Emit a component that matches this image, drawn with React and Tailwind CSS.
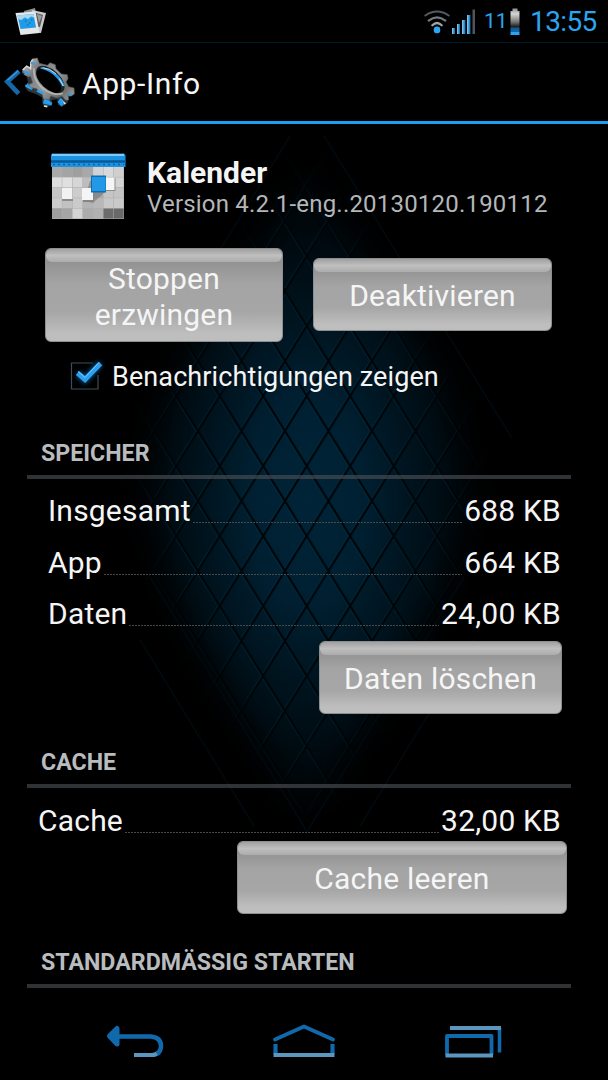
import React from 'react';

const storage = [
  { label: 'Insgesamt', value: '688 KB' },
  { label: 'App', value: '664 KB' },
  { label: 'Daten', value: '24,00 KB' },
];

const Wallpaper = () => (
  <svg className="col-start-1 row-start-1" width="608" height="1080" viewBox="0 0 608 1080">
    <defs>
      <radialGradient id="glow" cx="0" cy="0" r="1" gradientUnits="userSpaceOnUse" gradientTransform="translate(307 500) scale(185 330)">
        <stop offset="0" stopColor="#002438" />
        <stop offset="0.3" stopColor="#002032" />
        <stop offset="0.55" stopColor="#00141f" />
        <stop offset="0.8" stopColor="#00090e" />
        <stop offset="1" stopColor="#000203" />
      </radialGradient>
      <pattern id="lattice" x="306.7" y="466" width="43.5" height="70" patternUnits="userSpaceOnUse">
        <path d="M-2 -3.2L45.5 73.2M45.5 -3.2L-2 73.2" stroke="#000508" strokeWidth="2.2" />
      </pattern>
      <pattern id="shine" x="304.7" y="466" width="43.5" height="70" patternUnits="userSpaceOnUse">
        <path d="M-2 -3.2L45.5 73.2M45.5 -3.2L-2 73.2" stroke="#003a58" strokeWidth="1" />
      </pattern>
      <filter id="soft" x="-20%" y="-20%" width="140%" height="140%">
        <feGaussianBlur stdDeviation="16" />
      </filter>
      <mask id="diamond">
        <path d="M307 165L390 290L455 400L475 500L445 590L380 705L307 820L234 705L169 590L139 500L159 400L224 290Z" fill="#ffffff" filter="url(#soft)" />
      </mask>
    </defs>
    <rect width="608" height="1080" fill="#000000" />
    <g mask="url(#diamond)">
      <rect y="124" width="608" height="870" fill="url(#glow)" />
      <rect y="124" width="608" height="870" fill="url(#shine)" opacity="0.35" />
      <rect y="124" width="608" height="870" fill="url(#lattice)" />
    </g>
    {/* faint outer seams */}
    <g fill="none" stroke="#000a10" strokeWidth="1.5">
      <path d="M150 577L300 820L307 832L314 820L464 577" />
      <path d="M140 640L254 826M474 640L360 826" />
      <path d="M290 136L182 312M324 136L512 438" />
    </g>
  </svg>
);

const PhotosIcon = () => (
  <svg width="32" height="30" viewBox="0 0 32 30">
    <path d="M9 4L20 1L24 22L12 26Z" fill="#8b8f92" />
    <path d="M17 3L31 6L26 26L14 25Z" fill="#c9c9c9" />
    <path d="M18 5L28 8L25 20L18 19Z" fill="#5b5b5b" />
    <path d="M22 7L27 9L24 16Z" fill="#9b9b9b" />
    <path d="M0.5 6L20.5 4.5L24.500 26L5.500 28Z" fill="#e4e6e8" />
    <path d="M2.500 8.500L18.500 7L21 20.500L5.500 22Z" fill="#1f9be8" />
    <path d="M2.500 8.500L18.500 7L19.200 10.500L16 9.500L13 12L9.500 10.500L6.500 13L3.200 12Z" fill="#a8d5f2" />
    <path d="M10 14h1.500M14 16h1.500M16 13h1.500M12 18h1.500" stroke="#0a5f9c" strokeWidth="1" />
  </svg>
);

const WifiIcon = () => (
  <svg width="26" height="26" viewBox="0 0 28 26" fill="none" strokeLinecap="round">
    <path d="M1.500 6Q14 -2.500 26.500 6" stroke="#555a5e" strokeWidth="2.200" />
    <path d="M5 11.500Q14 4.500 23 11.500" stroke="#74797d" strokeWidth="2.400" />
    <path d="M9 16.500Q14 11.500 19 16.500" stroke="#a0a4a7" strokeWidth="2.500" />
    <circle cx="14" cy="21.500" r="3.600" fill="#2da5f2" />
  </svg>
);

const SignalIcon = () => (
  <svg width="24" height="26" viewBox="0 0 24 26">
    <defs>
      <linearGradient id="bar" x1="0" y1="0" x2="1" y2="0">
        <stop offset="0" stopColor="#8fd0f8" />
        <stop offset="1" stopColor="#0668aa" />
      </linearGradient>
    </defs>
    <rect x="0" y="19" width="3" height="6" fill="url(#bar)" />
    <rect x="5" y="15" width="3" height="10" fill="url(#bar)" />
    <rect x="10" y="11" width="3.500" height="14" fill="url(#bar)" />
    <rect x="15" y="6" width="3.500" height="19" fill="url(#bar)" />
    <rect x="20.500" y="0.500" width="2.500" height="24.500" fill="#505457" />
  </svg>
);

const BatteryIcon = () => (
  <svg width="10" height="28" viewBox="0 0 10 28">
    <defs>
      <linearGradient id="cell" x1="0" y1="0" x2="0" y2="1">
        <stop offset="0" stopColor="#8f8f8f" />
        <stop offset="0.200" stopColor="#d6d6d6" />
        <stop offset="0.500" stopColor="#777777" />
        <stop offset="0.680" stopColor="#1c2226" />
        <stop offset="0.740" stopColor="#30414c" />
        <stop offset="0.750" stopColor="#0b5c94" />
        <stop offset="0.890" stopColor="#0b6db0" />
        <stop offset="0.900" stopColor="#2aa4f0" />
        <stop offset="1" stopColor="#2aa4f0" />
      </linearGradient>
    </defs>
    <path d="M2.500 0.500H7.500V3H9.500V27H0.500V3H2.500Z" fill="url(#cell)" />
  </svg>
);

const GearIcon = () => (
  <svg width="76" height="56" viewBox="0 24 228 168">
    <defs>
      <linearGradient id="steel" x1="70" y1="40" x2="215" y2="165" gradientUnits="userSpaceOnUse">
        <stop offset="0" stopColor="#c4c4c4" />
        <stop offset="0.25" stopColor="#7d7d7d" />
        <stop offset="0.55" stopColor="#9a9a9a" />
        <stop offset="0.8" stopColor="#6c6c6c" />
        <stop offset="1" stopColor="#a4a4a4" />
      </linearGradient>
    </defs>
    {/* back chevron */}
    <path d="M57 76L22 107L56 143" fill="none" stroke="#1567a8" strokeWidth="14" />
    <path d="M55 74L22 103" fill="none" stroke="#3a9ade" strokeWidth="4" />
    {/* side walls */}
    <path d="M68 68L90 60L100 100L128 138L170 148L198 150L206 158L202 172L186 182L174 176L172 160L156 162L152 180L136 184L128 176L126 154L108 144L84 136L76 124L84 108L80 92L68 84Z" fill="#30363a" />
    <path d="M68 74L90 84M80 116L98 128M130 168L156 174M176 164L188 178M204 148L214 142" fill="none" stroke="#1d9bf0" strokeWidth="10" />
    <path d="M112 130L132 140" fill="none" stroke="#1d8fdc" strokeWidth="15" />
    <path d="M113 126L133 135M74 84L88 90M182 160L196 174M132 180L142 182" fill="none" stroke="#dfe5e8" strokeWidth="5" />
    {/* face */}
    <path
      d="M92 50L98 38L112 36L118 52L142 58L150 50L166 56L168 68L184 84L202 86L204 98L198 108L206 122L222 126L223 144L214 150L204 146L206 162L196 162L186 150L172 156L152 150L148 162L130 158L126 142L110 128L90 124L86 116L98 110L92 92L76 88L68 72L80 60L92 68Z"
      fill="url(#steel)"
      stroke="#55595c"
      strokeWidth="2"
      strokeLinejoin="round"
    />
    <path d="M68 72L80 60L92 68L92 50L98 40" fill="none" stroke="#dedede" strokeWidth="4" />
    <path d="M72 76L90 84M92 50L104 54M132 162L150 168M180 158L190 170M206 146L214 148" stroke="#2ba0f0" strokeWidth="6" />
    <path d="M76 118L94 128M114 134L130 142" stroke="#2ba0f0" strokeWidth="7" />
    <path d="M102 66Q98 108 138 134Q168 150 188 142" fill="none" stroke="#b4b4b4" strokeWidth="5" />
    {/* bore */}
    <ellipse rx="52" ry="28" transform="translate(151 100) rotate(43)" fill="#1b2023" />
    <path d="M122 67Q168 72 191 120" fill="none" stroke="#1d9bf0" strokeWidth="8" />
    <path d="M128 65Q150 66 168 84M178 98L190 120" fill="none" stroke="#d5dade" strokeWidth="3" />
    <ellipse rx="46" ry="23" transform="translate(146 105) rotate(43)" fill="#000000" />
  </svg>
);

const CalendarIcon = () => {
  // Shade of each tile, row by row
  const tiles = [
    '#a9a9a9', '#a4a4a4', '#9f9f9f', '#a8a8a8', '#d2d2d2', '#d8d8d8', '#cfcfcf',
    '#dedede', '#e0e0e0', '#d6d6d6', '#bdbdbd', '#b2b2b2', '#c2c2c2', '#d4d4d4',
    '#c6c6c6', '#d9d9d9', '#cdcdcd', '#b9b9b9', '#a9a9a9', '#c5c5c5', '#c4c4c4',
    '#cccccc', '#c2c2c2', '#cacaca', '#b4b4b4', '#b8b8b8', '#c8c8c8', '#c9c9c9',
    '#9d9d9d', '#a5a5a5', '#d4d4d4', '#acacac', '#b1b1b1', '#6c6c6c', '#696969',
  ];
  return (
    <svg width="76" height="67" viewBox="0 0 76 67">
      <rect x="2" y="13" width="72" height="53" fill="#adadad" />
      {tiles.map((fill, i) => (
        <rect key={i} x={2 + (i % 7) * 10.3} y={14 + Math.floor(i / 7) * 10.4} width="9.800" height="9.900" fill={fill} />
      ))}
      <path d="M52 24L56 38L43 50L34 48L40 28Z" fill="#777777" opacity="0.6" />
      <rect x="12" y="35" width="11" height="13" fill="#8c8c8c" />
      <rect x="12" y="35" width="10.500" height="11" fill="#f2f2f2" />
      <rect x="33" y="36" width="11" height="13" fill="#858585" />
      <rect x="32" y="35" width="11" height="12" fill="#f5f5f5" />
      <rect x="56" y="25" width="9.500" height="13" fill="#8c8c8c" />
      <rect x="55" y="24.500" width="9.500" height="12.500" fill="#f5f5f5" />
      <rect x="41" y="22.500" width="15" height="17" fill="#0b6fb5" />
      <rect x="42" y="24" width="13.500" height="14" fill="#2199e6" />
      <path d="M2 0.500H74L75.500 2V14H1V2Z" fill="#1c93e0" />
      <path d="M2 2H74" stroke="#84c9f6" strokeWidth="2" />
      <path d="M1 8.500H75.500" stroke="#075a99" strokeWidth="2.500" />
      <path d="M3 11.500H74" stroke="#0a65a8" strokeWidth="1.500" strokeDasharray="2 3" />
    </svg>
  );
};

const CheckboxIcon = () => (
  <svg className="overflow-visible" width="33" height="30" viewBox="0 0 33 30">
    <defs>
      <filter id="halo" x="-50%" y="-50%" width="200%" height="200%">
        <feGaussianBlur stdDeviation="2.500" />
      </filter>
    </defs>
    <path d="M22 2H0.500V28H27V14" fill="none" stroke="#3e4d58" strokeWidth="1.200" />
    <path d="M7 12.500L14 19L29 2.500" fill="none" stroke="#0072b5" strokeWidth="6" filter="url(#halo)" opacity="0.8" />
    <path d="M6.500 12L14 18.500L29.500 2.500" fill="none" stroke="#2ba0f0" strokeWidth="5" />
    <path d="M7 10.500L14 16.500L28 1.500" fill="none" stroke="#7cc6f7" strokeWidth="1" />
  </svg>
);

const GlossButton = ({ children, className }) => (
  <button
    className={`flex flex-col overflow-hidden rounded-md border border-[#8e8e8e] bg-[linear-gradient(to_bottom,#929292_14%,#a4a4a4_38%,#a6a6a6_68%,#bebebe_92%)] text-[30px] leading-[36px] tracking-[0.2px] text-[#f5f5f5] ${className}`}
  >
    <span className="h-[13px] w-full shrink-0 rounded-md bg-linear-to-b from-[#a0a0a0] via-[#bfbfbf] to-[#acacac]" />
    <span className="-mt-[10px] flex w-full grow items-center justify-center">{children}</span>
  </button>
);

const SectionHeader = ({ title }) => (
  <div className="ml-[27px] flex h-[50px] w-[544px] items-end border-b-4 border-[#4a4f53]/65 pl-3.5 pb-1.5">
    <h2 className="text-[23.200px] font-bold leading-[32px] text-[#b9bcbe]">{title}</h2>
  </div>
);

const SizeRow = ({ label, value }) => (
  <div className="flex h-[51.500px] items-center text-[30px] leading-[36px]">
    <span className="tracking-[0.2px]">{label}</span>
    <span className="ml-0.5 mr-0.5 mt-[23px] h-px grow bg-[repeating-linear-gradient(90deg,#45494c_0_2px,transparent_2px_3px)]" />
    <span className="tracking-[0.2px]">{value}</span>
  </div>
);

const NavBar = () => (
  <nav className="flex h-[77px] items-center">
    <svg className="ml-[106px]" width="58" height="36" viewBox="0 0 58 36" fill="none">
      <path d="M28 31H46Q50 31 53 28" stroke="#5b96be" strokeWidth="4.200" />
      <path d="M10 12.500H45Q55 13.500 55 22Q55 27 51 30" stroke="#1069ad" strokeWidth="4.500" />
      <path d="M3.500 12L11 4.500V20Z" fill="#1069ad" stroke="#1069ad" strokeWidth="5" strokeLinejoin="round" />
    </svg>
    <svg className="ml-[108px]" width="64" height="36" viewBox="0 0 64 36" fill="none">
      <path d="M3 15.500L32 2.500L61 15.500" stroke="#1069ad" strokeWidth="3.800" strokeLinecap="round" strokeLinejoin="round" />
      <path d="M3.500 20V30M60.500 20V30" stroke="#1069ad" strokeWidth="4.200" />
      <path d="M1.500 31H62.500" stroke="#5b96be" strokeWidth="4.200" />
    </svg>
    <svg className="ml-[108px]" width="58" height="36" viewBox="0 0 58 36" fill="none">
      <path d="M55.500 4V28.500" stroke="#1069ad" strokeWidth="3.500" />
      <path d="M6 4H57" stroke="#5b96be" strokeWidth="4" />
      <path d="M3 31V12H47.500V31" stroke="#1069ad" strokeWidth="3.800" strokeLinejoin="round" />
      <path d="M1.500 31.500H49" stroke="#5b96be" strokeWidth="4" />
    </svg>
  </nav>
);

const App = () => {
  return (
    <div className="grid h-[1080px] w-[608px] overflow-hidden bg-black font-[Roboto,sans-serif] text-[#f5f5f5]">
      <Wallpaper />
      <div className="col-start-1 row-start-1 flex flex-col whitespace-nowrap">
        {/* Status bar */}
        <div className="flex h-[43px] items-center border-b border-[#001a26] pt-px text-[#2ba5f0]">
          <span className="ml-[15px]"><PhotosIcon /></span>
          <span className="ml-auto"><WifiIcon /></span>
          <span className="ml-0.5"><SignalIcon /></span>
          <span className="ml-2 w-[22px] text-[21px]">11</span>
          <span className="ml-1"><BatteryIcon /></span>
          <span className="ml-2.5 mr-3 w-[66px] text-[28px] tracking-[-0.6px]">13:55</span>
        </div>

        {/* Action bar */}
        <header className="flex h-[81px] items-center border-b-[3px] border-[#1b9ff0]">
          <GearIcon />
          <h1 className="ml-1.5 mt-0.5 text-[30px] tracking-[0.6px]">App-Info</h1>
        </header>

        <main className="flex h-[879px] flex-col">
          <div className="flex h-[124px] pl-[50px] pt-[29px]">
            <CalendarIcon />
            <div className="ml-[21px] pt-0.5">
              <div className="text-[30px] font-bold leading-[36px]">Kalender</div>
              <div className="text-[24px] leading-[26px] tracking-[0.2px] text-[#b4b7b9]">Version 4.2.1-eng..20130120.190112</div>
            </div>
          </div>

          <div className="ml-[45px] flex h-[94px] items-start gap-[30px]">
            <GlossButton className="h-[94px] w-[238px]">Stoppen<br />erzwingen</GlossButton>
            <GlossButton className="mt-2.5 h-[73px] w-[239px]">Deaktivieren</GlossButton>
          </div>

          <label className="ml-[71px] flex h-[68px] items-center">
            <CheckboxIcon />
            <span className="ml-2 mt-0.5 text-[27px] tracking-[0.1px]">Benachrichtigungen zeigen</span>
          </label>

          <div className="mt-[19px]">
            <SectionHeader title="SPEICHER" />
          </div>
          <div className="ml-[48px] mr-[47px] mt-[6.500px]">
            {storage.map((row) => (
              <SizeRow key={row.label} label={row.label} value={row.value} />
            ))}
          </div>
          <GlossButton className="ml-[319px] mt-[0.500px] h-[73px] w-[243px] shrink-0">Daten löschen</GlossButton>

          <div className="mt-6">
            <SectionHeader title="CACHE" />
          </div>
          <div className="ml-[38px] mr-[47px] mt-[8px]">
            <SizeRow label="Cache" value="32,00 KB" />
          </div>
          <GlossButton className="-mt-1.5 ml-[237px] h-[73px] w-[330px] shrink-0">Cache leeren</GlossButton>

          <div className="mt-6">
            <SectionHeader title="STANDARDMÄSSIG STARTEN" />
          </div>
        </main>

        <NavBar />
      </div>
    </div>
  );
};

export default App;
